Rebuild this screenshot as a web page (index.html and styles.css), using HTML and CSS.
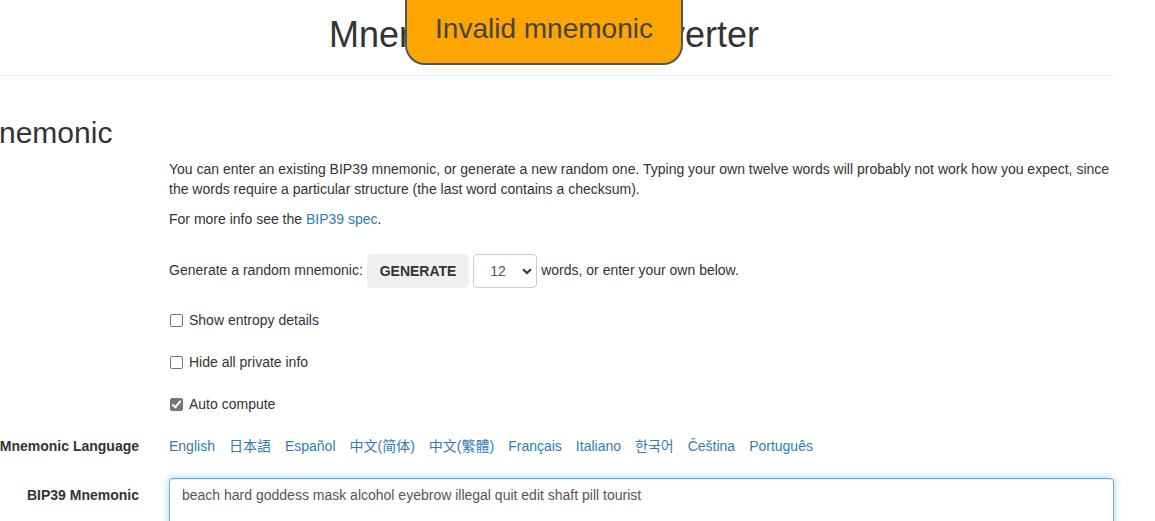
FILE: index.html
```html
<!DOCTYPE html>
<html lang="en">
<head>
<meta charset="utf-8">
<title>Mnemonic Code Converter</title>
<link rel="stylesheet" href="styles.css">
</head>
<body>
<div class="container">
  <div class="feedback-container">
    <div class="feedback">Invalid mnemonic</div>
  </div>
  <h1 class="title">Mnemonic Code Converter</h1>
  <hr class="divider">
  <h2 class="section-title">Mnemonic</h2>
  <form class="form">
    <div class="form-row">
      <div class="label-col"></div>
      <div class="control-col">
        <p class="para">You can enter an existing BIP39 mnemonic, or generate a new random one. Typing your own twelve words will probably not work how you expect, since the words require a particular structure (the last word contains a checksum).</p>
        <p class="para">For more info see the <a class="link" href="#">BIP39 spec</a>.</p>
      </div>
    </div>
    <div class="form-row">
      <div class="label-col"></div>
      <div class="control-col generate-line">
        <span>Generate a random mnemonic:</span>
        <button type="button" class="btn">GENERATE</button>
        <span class="select-wrap">
          <select class="select">
            <option>12</option>
          </select>
          <svg class="chevron" width="10" height="7" viewBox="0 0 10 7"><path d="M1 1.2 L5 5 L9 1.2" fill="none" stroke="#333" stroke-width="2"/></svg>
        </span>
        <span>words, or enter your own below.</span>
      </div>
    </div>
    <div class="form-row">
      <div class="label-col"></div>
      <div class="control-col check-line">
        <label class="check"><input type="checkbox" class="cb"> Show entropy details</label>
      </div>
    </div>
    <div class="form-row">
      <div class="label-col"></div>
      <div class="control-col check-line">
        <label class="check"><input type="checkbox" class="cb"> Hide all private info</label>
      </div>
    </div>
    <div class="form-row">
      <div class="label-col"></div>
      <div class="control-col check-line">
        <label class="check"><input type="checkbox" class="cb" checked> Auto compute</label>
      </div>
    </div>
    <div class="form-row">
      <label class="label-col field-label">Mnemonic Language</label>
      <div class="control-col languages">
        <a class="link" href="#">English</a>
        <a class="link" href="#">日本語</a>
        <a class="link" href="#">Español</a>
        <a class="link" href="#">中文(简体)</a>
        <a class="link" href="#">中文(繁體)</a>
        <a class="link" href="#">Français</a>
        <a class="link" href="#">Italiano</a>
        <a class="link" href="#">한국어</a>
        <a class="link" href="#">Čeština</a>
        <a class="link" href="#">Português</a>
      </div>
    </div>
    <div class="form-row">
      <label class="label-col field-label">BIP39 Mnemonic</label>
      <div class="control-col">
        <textarea class="textarea" rows="3">beach hard goddess mask alcohol eyebrow illegal quit edit shaft pill tourist</textarea>
      </div>
    </div>
  </form>
</div>
</body>
</html>
```

FILE: styles.css
```css
html, body {
  margin: 0;
  padding: 0;
  overflow: hidden;
}

body {
  font-family: "Liberation Sans", Arial, "Noto Sans CJK SC", sans-serif;
  font-size: 14px;
  line-height: 20px;
  color: #333;
  background: #fff;
}

.container {
  position: relative;
  width: 1140px;
  margin-left: -26px;
  padding-top: 15px;
}

.feedback-container {
  position: absolute;
  top: -5px;
  left: 0;
  right: 0;
  text-align: center;
  z-index: 4;
}

.feedback {
  display: inline-block;
  padding: 14px 28px;
  background-color: orange;
  font-size: 28px;
  line-height: 40px;
  color: #444;
  border: 2px solid #555;
  border-top: 0;
  border-bottom-left-radius: 20px;
  border-bottom-right-radius: 20px;
}

.title {
  margin: 0 0 10px;
  font-size: 36px;
  line-height: 39.6px;
  font-weight: 400;
  text-align: center;
  color: #333;
}

.divider {
  margin: 20px 0;
  border: 0;
  border-top: 1px solid #eee;
  height: 0;
}

.section-title {
  margin: 40px 0 10px;
  font-size: 30px;
  line-height: 33px;
  font-weight: 400;
  color: #333;
}

.form {
  margin: 0;
}

.form-row {
  display: flex;
  margin: 0 -15px 15px;
}

.label-col {
  box-sizing: border-box;
  width: 16.6667%;
  flex: none;
  padding: 7px 15px 0;
  text-align: right;
}

.field-label {
  font-weight: 700;
  white-space: nowrap;
}

.control-col {
  box-sizing: border-box;
  width: 83.3333%;
  flex: none;
  padding: 0 15px;
}

.para {
  margin: 0 0 10px;
}

.link {
  color: #337ab7;
  text-decoration: none;
}

.generate-line {
  line-height: 20px;
}

.btn {
  display: inline-block;
  box-sizing: border-box;
  height: 34px;
  padding: 6px 12px;
  margin: 0;
  font-family: inherit;
  font-size: 14px;
  line-height: 20px;
  font-weight: 700;
  color: #333;
  background: #efefef;
  border: 1px solid #efefef;
  border-radius: 4px;
  vertical-align: middle;
}

.select-wrap {
  position: relative;
  display: inline-block;
  vertical-align: middle;
}

.select {
  appearance: none;
  -webkit-appearance: none;
  box-sizing: border-box;
  width: 64px;
  height: 34px;
  padding: 6px 12px 6px 16px;
  margin: 0;
  font-family: inherit;
  font-size: 14px;
  color: #555;
  background: #fff;
  border: 1px solid #ccc;
  border-radius: 4px;
  display: block;
}

.chevron {
  position: absolute;
  right: 5px;
  top: 14px;
  pointer-events: none;
}

.check-line {
  padding-top: 7px;
  min-height: 27px;
  box-sizing: border-box;
}

.check {
  display: flex;
  align-items: flex-start;
  gap: 6px;
  font-weight: 400;
  cursor: pointer;
}

.cb {
  appearance: none;
  -webkit-appearance: none;
  position: relative;
  box-sizing: border-box;
  width: 13px;
  height: 13px;
  margin: 4px 0 0 1px;
  border: 1px solid #767676;
  border-radius: 2px;
  background: #fff;
  flex: none;
}

.cb:checked {
  background: #767676;
  border-color: #767676;
}

.cb:checked::after {
  content: "";
  position: absolute;
  left: 3px;
  top: 0px;
  width: 3px;
  height: 7px;
  border-right: 2px solid #fff;
  border-bottom: 2px solid #fff;
  transform: rotate(40deg);
}

.languages {
  display: flex;
  gap: 14px;
  padding-top: 7px;
  padding-bottom: 7px;
  line-height: 20px;
}

.textarea {
  display: block;
  box-sizing: border-box;
  width: 100%;
  height: 74px;
  padding: 6px 12px;
  margin: 0;
  font-family: inherit;
  font-size: 14px;
  line-height: 20px;
  color: #555;
  background: #fff;
  border: 1px solid #66afe9;
  border-radius: 4px;
  box-shadow: inset 0 1px 1px rgba(0, 0, 0, .075), 0 0 8px rgba(102, 175, 233, .6);
  resize: vertical;
  outline: none;
}
```
